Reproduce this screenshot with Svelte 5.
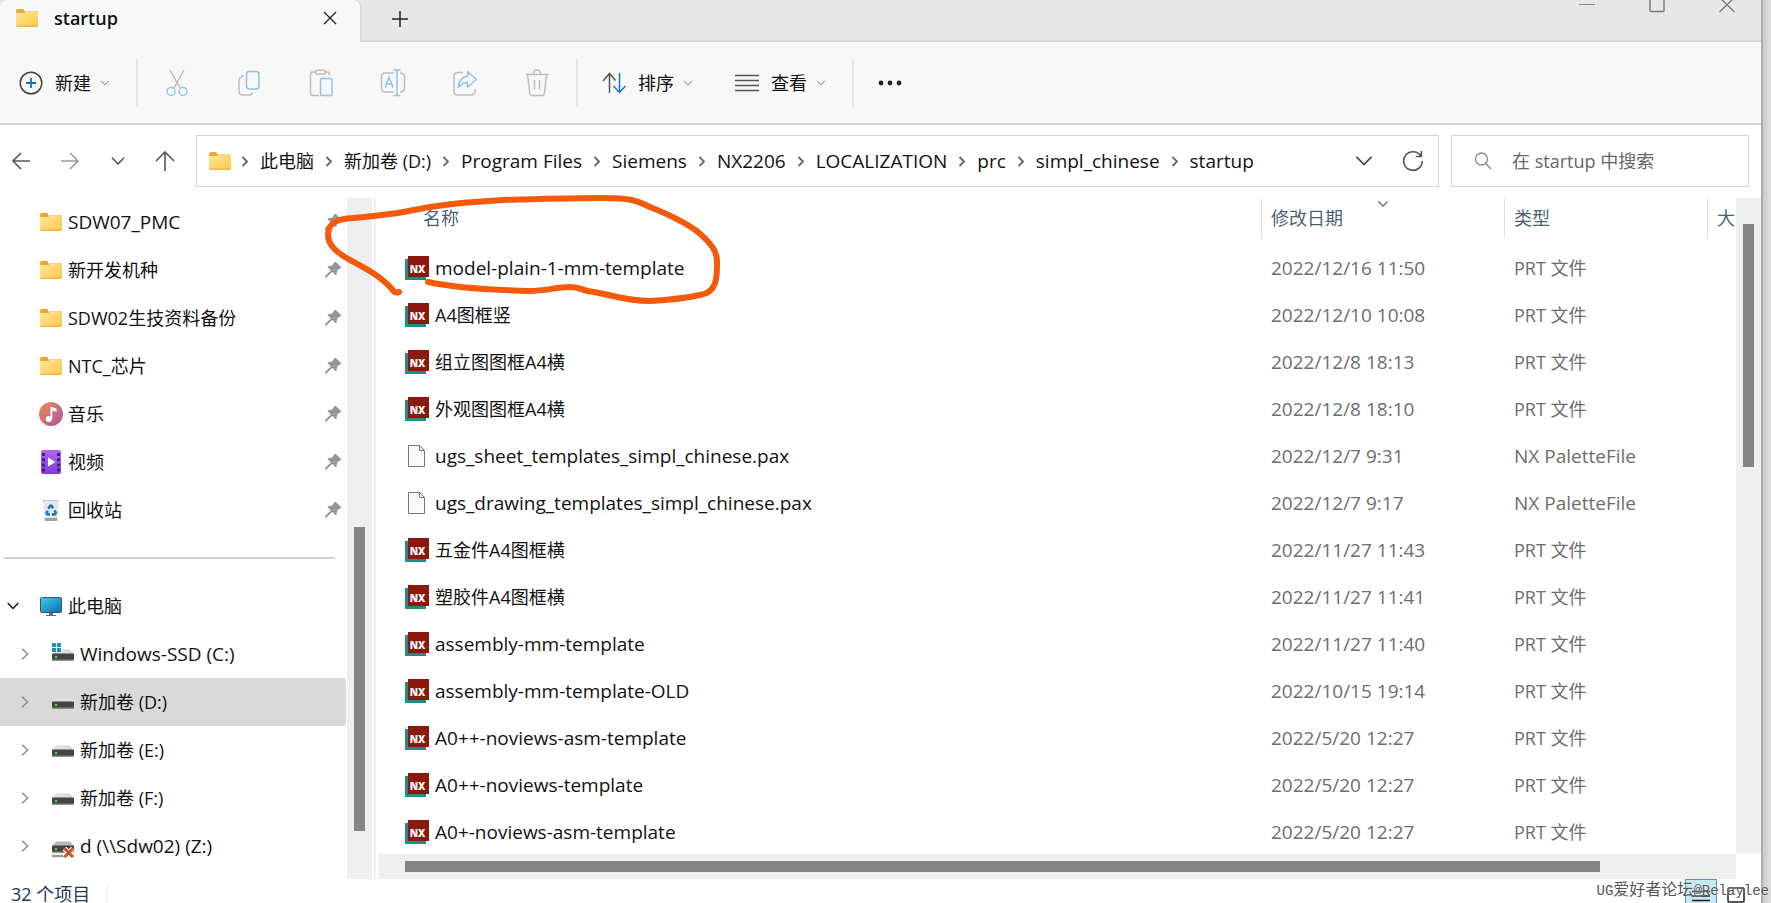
<script lang="ts">
  type FileRow = { name: string; date: string; kind: 'prt' | 'pax' };
  type Drive = { label: string; icon: string };

  const crumbs = ['此电脑', '新加卷 (D:)', 'Program Files', 'Siemens', 'NX2206', 'LOCALIZATION', 'prc', 'simpl_chinese', 'startup'];

  const tools = [
    { id: 'cut', label: '剪切' },
    { id: 'copy', label: '复制' },
    { id: 'paste', label: '粘贴' },
    { id: 'rename', label: '重命名' },
    { id: 'share', label: '共享' },
    { id: 'trash', label: '删除' }
  ];

  const pinned = [
    { label: 'SDW07_PMC', icon: 'folder' },
    { label: '新开发机种', icon: 'folder' },
    { label: 'SDW02生技资料备份', icon: 'folder' },
    { label: 'NTC_芯片', icon: 'folder' },
    { label: '音乐', icon: 'music' },
    { label: '视频', icon: 'video' },
    { label: '回收站', icon: 'bin' }
  ];

  const drives: Drive[] = [
    { label: 'Windows-SSD (C:)', icon: 'system' },
    { label: '新加卷 (D:)', icon: 'drive' },
    { label: '新加卷 (E:)', icon: 'drive' },
    { label: '新加卷 (F:)', icon: 'drive' },
    { label: 'd (\\\\Sdw02) (Z:)', icon: 'network' }
  ];

  const files: FileRow[] = [
    { name: 'model-plain-1-mm-template', date: '2022/12/16 11:50', kind: 'prt' },
    { name: 'A4图框竖', date: '2022/12/10 10:08', kind: 'prt' },
    { name: '组立图图框A4横', date: '2022/12/8 18:13', kind: 'prt' },
    { name: '外观图图框A4横', date: '2022/12/8 18:10', kind: 'prt' },
    { name: 'ugs_sheet_templates_simpl_chinese.pax', date: '2022/12/7 9:31', kind: 'pax' },
    { name: 'ugs_drawing_templates_simpl_chinese.pax', date: '2022/12/7 9:17', kind: 'pax' },
    { name: '五金件A4图框横', date: '2022/11/27 11:43', kind: 'prt' },
    { name: '塑胶件A4图框横', date: '2022/11/27 11:41', kind: 'prt' },
    { name: 'assembly-mm-template', date: '2022/11/27 11:40', kind: 'prt' },
    { name: 'assembly-mm-template-OLD', date: '2022/10/15 19:14', kind: 'prt' },
    { name: 'A0++-noviews-asm-template', date: '2022/5/20 12:27', kind: 'prt' },
    { name: 'A0++-noviews-template', date: '2022/5/20 12:27', kind: 'prt' },
    { name: 'A0+-noviews-asm-template', date: '2022/5/20 12:27', kind: 'prt' }
  ];

  const kinds = { prt: 'PRT 文件', pax: 'NX PaletteFile' };

  let selected = $state('新加卷 (D:)');
  let search = $state('');

  // scroll positions, in percent of the track
  const sideScroll = { start: 48.3, size: 44.6 };
  const fileScroll = { start: 4, size: 37 };
  const wideScroll = { start: 2, size: 88 };

  // latin-only labels are set one size up to sit level with the chinese ones
  function isLatin(text: string) {
    return /^[\x20-\x7e]+$/.test(text);
  }
</script>

{#snippet chevron(size: number)}
  <svg width={size} height={size} viewBox="0 0 12 12" fill="none" stroke="currentColor" stroke-width={size > 14 ? 1 : 1.2}><path d="M1.5 3.5L6 8.2l4.500-4.700" /></svg>
{/snippet}

{#snippet icon(name: string)}
  {#if name === 'folder'}
    <svg class="icon" viewBox="0 0 24 24">
      <defs>
        <linearGradient id="folder-front" x1="0" y1="0" x2="1" y2="1">
          <stop offset="0" stop-color="#ffe69a" />
          <stop offset="1" stop-color="#fdca45" />
        </linearGradient>
      </defs>
      <path d="M1 5q0-2 2-2h4.500q1 0 1.500 1l.5 1.500H23V10H1z" fill="#e3ab2f" />
      <path d="M1 7h8l1.500-1H23v13.500q0 1-1 1H2q-1 0-1-1z" fill="url(#folder-front)" />
      <path d="M1.500 20.200h21" stroke="#dba635" />
    </svg>
  {:else if name === 'music'}
    <svg class="icon" viewBox="0 0 24 24">
      <defs>
        <linearGradient id="music-disc" x1="0" y1="0" x2="1" y2="1">
          <stop offset="0" stop-color="#ee8a55" />
          <stop offset="1" stop-color="#a8559d" />
        </linearGradient>
      </defs>
      <circle cx="12" cy="12" r="12" fill="url(#music-disc)" />
      <circle cx="9.800" cy="17" r="3" fill="#fff" />
      <path d="M11.500 17V4.500l6 2v3.500l-4.200-1.500V17z" fill="#fff" />
    </svg>
  {:else if name === 'video'}
    <svg class="icon" viewBox="0 0 24 24">
      <defs>
        <linearGradient id="video-film" x1="0" y1="0" x2="0" y2="1">
          <stop offset="0" stop-color="#b069ec" />
          <stop offset="1" stop-color="#8338d6" />
        </linearGradient>
      </defs>
      <rect x="2" width="20" height="24" rx="2" fill="url(#video-film)" />
      <path d="M4.500 3v20M19.500 3v20" stroke="#44207c" stroke-width="3" stroke-dasharray="3 2.200" />
      <path d="M9 7.500l7.500 4.500L9 16.500z" fill="#fff" />
    </svg>
  {:else if name === 'bin'}
    <svg class="icon" viewBox="0 0 24 24">
      <path d="M4 2.500h16l-1.800 20H5.800z" fill="#e4e8ec" />
      <path d="M5.600 20h12.800l-.3 3H5.900z" fill="#9ba1a8" />
      <path d="M4 2.500h16" stroke="#b6bbc1" stroke-dasharray="3 1" />
      <g fill="none" stroke="#1b77c5" stroke-width="2.600">
        <path d="M9.300 10.800l1.600-2.600q1-1 2 0l1.300 2" />
        <path d="M15.400 12.300l1.200 2.200q.2 1.700-1.600 1.900h-2" />
        <path d="M10.800 16.400H9q-1.800-.4-1.200-2l.9-1.500" />
      </g>
    </svg>
  {:else if name === 'pc'}
    <svg class="icon" viewBox="0 0 24 24">
      <defs>
        <linearGradient id="pc-screen" x1="0" y1="0" x2="1" y2="1">
          <stop offset="0" stop-color="#37d2e6" />
          <stop offset="1" stop-color="#1268b8" />
        </linearGradient>
      </defs>
      <path d="M10 18h4v3h3v1H7v-1h3z" fill="#61717e" />
      <rect x="1.500" y="3.500" width="21" height="15" rx="1" fill="url(#pc-screen)" stroke="#36566d" />
    </svg>
  {:else}
    <svg class="icon" viewBox="0 0 24 24">
      <path d="M5 7.500h14l4 4.500H1z" fill={name === 'network' ? '#b9b9b9' : '#dedede'} />
      <rect x="1" y="11.500" width="22" height="7" rx="1" fill="#434343" />
      <path d="M1 18h22" stroke="#8a8a8a" />
      <circle cx="5" cy="15" r="1.300" fill="#5dc463" />
      {#if name === 'system'}
        <path d="M0 0h11v10H0z" fill="#fff" />
        <path d="M1 1h4v4H1zM6 1h4v4H6zM1 6h4v4H1zM6 6h4v4H6z" fill="#1b8fcb" />
      {:else if name === 'network'}
        <path d="M1 22h16" stroke="#9a9a9a" stroke-width="2.500" />
        <path d="M13.500 14.500l8.500 8.500m0-8.500L13.500 23" stroke="#fff" stroke-width="5" />
        <path d="M13.500 14.500l8.500 8.500m0-8.500L13.500 23" stroke="#c94e20" stroke-width="3" />
      {/if}
    </svg>
  {/if}
{/snippet}

{#snippet tool(name: string)}
  <svg width="26" height="28" viewBox="0 0 26 28" fill="none" stroke="#bdbdbd" stroke-width="1.500">
    {#if name === 'cut'}
      <path d="M6 1l10 18M20 1L10 19" />
      <g stroke="#8fc3ea"><circle cx="7" cy="22.500" r="4" /><circle cx="19" cy="22.500" r="4" /></g>
    {:else if name === 'copy'}
      <path d="M8 7H6q-3 2-3 4v11q0 4 4 4h6q3 0 3.500-2.500" />
      <rect x="10.500" y="2.500" width="12.500" height="17.500" rx="3" stroke="#8fc3ea" />
    {:else if name === 'paste'}
      <path d="M8 3H4.500Q2.500 3 2.500 5v19q0 2.500 2 2.500H11M17 3h2.500q2 0 2 3" />
      <rect x="7.500" y="1.200" width="10" height="4" rx="2" />
      <rect x="12.500" y="9.500" width="11.500" height="17" rx="1.500" stroke="#8fc3ea" />
    {:else if name === 'rename'}
      <path d="M14 4H5Q1.500 4 1.500 8v11q0 4 3.500 4h9M20 4q4.500 0 4.500 4v11q0 4-4.500 4" />
      <path d="M13.500 1h7M13.500 26.500h7M17 1v25.500M5 18.500L9 8l4 10.500M6.500 15h5" stroke="#8fc3ea" />
    {:else if name === 'share'}
      <path d="M11 3.500H6q-4 0-4 4v14Q2 26 6 26h13q4 0 4-4.500V20" />
      <path d="M15.500 2.500l9 8-9 7.500v-4.500q-5-.5-9 5 .5-10 9-11.500z" stroke="#8fc3ea" stroke-linejoin="round" />
    {:else}
      <path d="M1.500 5.500h23M9.500 5q0-4 3.500-4t3.500 4M3.500 5.500l2.300 19q.3 2 2.300 2h10q2 0 2.300-2l2.200-19M10.500 11v9.500M15.500 11v9.500" />
    {/if}
  </svg>
{/snippet}

<div class="page">
  <div class="window">
    <header class="tabs">
      <div class="tab">
        {@render icon('folder')}
        <span>startup</span>
        <button aria-label="关闭标签页">
          <svg width="14" height="14" viewBox="0 0 14 14" stroke="#222" stroke-width="1.300"><path d="M1 1l12 12M13 1L1 13" /></svg>
        </button>
      </div>
      <button class="add" aria-label="新标签页">
        <svg width="16" height="16" viewBox="0 0 16 16" stroke="#222" stroke-width="1.500"><path d="M8 0v16M0 8h16" /></svg>
      </button>
      <div class="controls">
        <button aria-label="最小化"><svg width="16" height="14" viewBox="0 0 16 14" stroke="#8a8a8a"><path d="M0 4.500h16" /></svg></button>
        <button aria-label="最大化"><svg width="16" height="14" viewBox="0 0 16 14" fill="none" stroke="#777" stroke-width="1.400"><rect x="1" y="-3" width="14" height="14.500" rx="1" /></svg></button>
        <button aria-label="关闭"><svg width="16" height="14" viewBox="0 0 16 14" stroke="#777" stroke-width="1.300"><path d="M.5-2.500l15 14.500M15.500-2.500L.5 12" /></svg></button>
      </div>
    </header>

    <div class="toolbar">
      <button class="command new">
        <svg width="24" height="24" viewBox="0 0 24 24" fill="none" stroke="#444" stroke-width="1.500">
          <circle cx="12" cy="12" r="10.800" /><path d="M12 7v10M7 12h10" stroke="#0f73c4" stroke-width="1.800" />
        </svg>
        新建
        {@render chevron(10)}
      </button>
      <div class="tools">
        {#each tools as item}
          <button aria-label={item.label} disabled>{@render tool(item.id)}</button>
        {/each}
      </div>
      <div class="group">
        <button class="command">
          <svg width="24" height="24" viewBox="0 0 24 24" fill="none" stroke="#555" stroke-width="1.500">
            <path d="M7.500 22V3M1 10l6.500-7.500 6 7" /><path d="M17.500 2v19M11.500 15l6 6.500 6-6.500" stroke="#1874c2" />
          </svg>
          排序
          {@render chevron(10)}
        </button>
        <button class="command">
          <svg width="24" height="24" viewBox="0 0 24 24" stroke="#555" stroke-width="1.500"><path d="M0 4.500h24M0 9.500h24M0 14.500h24M0 19.500h24" /></svg>
          查看
          {@render chevron(10)}
        </button>
      </div>
      <button class="more" aria-label="更多">
        <svg width="24" height="6" viewBox="0 0 24 6" fill="#222"><circle cx="3" cy="3" r="2.400" /><circle cx="12" cy="3" r="2.400" /><circle cx="21" cy="3" r="2.400" /></svg>
      </button>
    </div>

    <div class="address">
      <nav class="history" aria-label="导航">
        <button aria-label="后退"><svg width="20" height="20" viewBox="0 0 20 20" fill="none" stroke="#555" stroke-width="1.600"><path d="M19 10H2M10 2l-8 8 8 8" /></svg></button>
        <button aria-label="前进"><svg width="20" height="20" viewBox="0 0 20 20" fill="none" stroke="#999" stroke-width="1.600"><path d="M1 10h17M10 2l8 8-8 8" /></svg></button>
        <button aria-label="最近">{@render chevron(16)}</button>
        <button aria-label="向上"><svg width="20" height="20" viewBox="0 0 20 20" fill="none" stroke="#555" stroke-width="1.600"><path d="M10 20V1M1 10l9-9 9 9" /></svg></button>
      </nav>
      <div class="path">
        {@render icon('folder')}
        <ol>
          {#each crumbs as crumb}
            <li>
              <svg width="30" height="12" viewBox="0 0 30 12" fill="none" stroke="#666" stroke-width="1.800"><path d="M12.500 2l4.500 4.500-4.500 4.500" /></svg>
              <a class:latin={isLatin(crumb)} href="#{crumb}">{crumb}</a>
            </li>
          {/each}
        </ol>
        <button aria-label="历史记录">{@render chevron(20)}</button>
        <button aria-label="刷新">
          <svg width="22" height="22" viewBox="0 0 22 22" fill="none" stroke="#555" stroke-width="1.600"><path d="M18.500 5.500A9.300 9.300 0 1 0 20.300 11M19.300 1v5.500h-5.500" /></svg>
        </button>
      </div>
      <label class="search">
        <svg width="18" height="18" viewBox="0 0 18 18" fill="none" stroke="#888" stroke-width="1.300"><circle cx="7.500" cy="7" r="6" /><path d="M11.800 11.500L17 17" /></svg>
        <input type="text" aria-label="搜索" placeholder="在 startup 中搜索" bind:value={search} />
      </label>
    </div>

    <main>
      <aside>
        <div class="tree">
          {#each pinned as item}
            <a class="node" href="#{item.label}">
              <span class="slot"></span>
              {@render icon(item.icon)}
              <span class="label" class:latin={isLatin(item.label)}>{item.label}</span>
              <svg class="pin" viewBox="0 0 16 16" fill="#8e989f"><path d="M9.500 0q1-.4 1.700.3l4.500 4.500q.7.800-.3 1.500l-3.200 1.900-.7 4.300q-.4 1-1.200.3L7.200 9.800 1.400 15.500H0v-1.400l5.800-5.700-2.900-2.900q-.8-.8.300-1.300l4.200-.8z" /></svg>
            </a>
          {/each}
          <hr />
          <a class="node" href="#pc">
            <span class="slot open">{@render chevron(14)}</span>
            {@render icon('pc')}
            <span class="label">此电脑</span>
          </a>
          {#each drives as drive}
            <a
              class="node"
              class:selected={drive.label === selected}
              href="#{drive.label}"
              onclick={() => (selected = drive.label)}
            >
              <span class="slot closed">{@render chevron(14)}</span>
              {@render icon(drive.icon)}
              <span class="label" class:latin={isLatin(drive.label)}>{drive.label}</span>
            </a>
          {/each}
        </div>
        <div class="track">
          <div class="thumb" style="margin-top: {sideScroll.start}cqh; height: {sideScroll.size}cqh"></div>
        </div>
      </aside>

      <section class="files">
        <div class="list">
          <table>
            <colgroup>
              <col />
              <col class="date" />
              <col class="type" />
              <col class="size" />
            </colgroup>
            <thead>
              <tr>
                <th><button class="first">名称</button></th>
                <th><button>修改日期<span class="sort">{@render chevron(12)}</span></button></th>
                <th><button>类型</button></th>
                <th><button>大</button></th>
              </tr>
            </thead>
            <tbody>
              {#each files as file}
                <tr>
                  <td>
                    <a class="file" class:latin={isLatin(file.name)} href="#{file.name}">
                      {#if file.kind === 'prt'}
                        <svg class="icon" viewBox="0 0 24 24">
                          <path d="M0 3h21v21H0z" fill="#258a86" />
                          <path d="M3 0h21v21H3z" fill="#8c170d" />
                          <text x="12.500" y="17" text-anchor="middle" font-size="10" font-weight="800" fill="#fff">NX</text>
                        </svg>
                      {:else}
                        <svg class="icon" viewBox="0 0 24 24" fill="#fafafa" stroke="#777"><path d="M3.500 1.500h11l5 5v16h-16zM14.500 1.500v5h5" /></svg>
                      {/if}
                      {file.name}
                    </a>
                  </td>
                  <td class="latin">{file.date}</td>
                  <td class:latin={isLatin(kinds[file.kind])}>{kinds[file.kind]}</td>
                  <td></td>
                </tr>
              {/each}
            </tbody>
          </table>
        </div>
        <div class="track">
          <div class="thumb" style="margin-top: {fileScroll.start}cqh; height: {fileScroll.size}cqh"></div>
        </div>
        <div class="track wide">
          <div class="thumb" style="margin-left: {wideScroll.start}%; width: {wideScroll.size}%"></div>
        </div>
      </section>
    </main>

    <footer>
      <span class="count">32 个项目</span>
      <button class="view active" aria-label="详细信息">
        <svg width="18" height="14" viewBox="0 0 18 14" stroke="#222" stroke-width="1.300"><path d="M0 3.500h18M0 8h18M0 12.500h18" /></svg>
      </button>
      <button class="view" aria-label="大图标">
        <svg width="18" height="16" viewBox="0 0 18 16" fill="none" stroke="#222" stroke-width="1.500"><rect x="1" y="1" width="16" height="14" rx="1" /></svg>
      </button>
    </footer>
  </div>

  <svg class="marker" width="420" height="130" viewBox="310 185 420 130">
    <path d="M399 292Q395 294 391 288C379 275 363 267 350 260C338 253 328 246 328 235C328 222 338 219 353 218C372 216 387 215 403 212C440 204 470 202 503 200C540 199 570 198 603 198C632 198 637 201 650 207C665 213 685 222 698 232C712 244 717 252 717 261C717 276 718 292 700 295C682 299 668 300 650 301C624 301 610 294 588 291C580 289 578 287 570 287C557 287 545 291 530 291C490 290 455 288 428 282" />
  </svg>
  <div class="watermark">UG<span>爱好者论坛</span>@Relaylee</div>
</div>

<style>
  :global(body) {
    margin: 0;
    background: #dcdcdc;
  }

  .page {
    position: relative;
    height: 100vh;
    overflow: hidden;
    padding-right: 8px;
    box-sizing: border-box;
    background: linear-gradient(to left, #dedede, #cbcbcb 8px);
    font-family: "Open Sans", "Noto Sans CJK SC", sans-serif;
    font-size: 18px;
    line-height: 24px;
    color: #111;
  }

  .window {
    display: flex;
    flex-direction: column;
    height: 100%;
    box-sizing: border-box;
    border-right: 2px solid #adadad;
    background: #fff;
  }

  .latin {
    font-size: 19px;
  }

  button {
    display: flex;
    align-items: center;
    padding: 0;
    border: 0;
    background: none;
    font: inherit;
    color: inherit;
  }

  a {
    color: inherit;
    text-decoration: none;
  }

  svg {
    display: block;
    flex: none;
  }

  .icon {
    width: 24px;
    height: 24px;
  }

  /* tabs */
  .tabs {
    display: flex;
    height: 42px;
    box-sizing: border-box;
    box-shadow: inset 0 -2px #dadada;
    background: #e7e7e7;
  }

  .tab {
    display: flex;
    align-items: center;
    width: 362px;
    box-sizing: border-box;
    padding: 0 23px 6px 15px;
    border-right: 2px solid #dadada;
    border-radius: 8px 8px 0 0;
    background: #f8f8f8;
    font-size: 18px;
    font-weight: 600;
  }

  .tab span {
    flex: 1;
    margin-left: 15px;
  }

  .add {
    height: 38px;
    margin-left: 30px;
  }

  .controls {
    display: flex;
    align-items: flex-start;
    gap: 54px;
    margin-left: auto;
    padding-right: 26px;
  }

  /* toolbar */
  .toolbar {
    display: flex;
    align-items: center;
    height: 83px;
    box-sizing: border-box;
    border-bottom: 2px solid #d3d3d3;
    background: #f8f8f8;
  }

  .command {
    gap: 12px;
  }

  .command :global(svg:last-child) {
    color: #777;
    margin-left: -3px;
  }

  .new {
    padding: 0 26px 0 19px;
  }

  .tools,
  .group {
    display: flex;
    align-items: center;
    height: 48px;
    border-left: 2px solid #e6e6e6;
  }

  .tools {
    gap: 46px;
    padding: 0 26px;
    border-right: 2px solid #e6e6e6;
  }

  .group {
    gap: 42px;
    padding: 0 26px 0 24px;
    border-left: 0;
    border-right: 2px solid #e6e6e6;
  }

  .more {
    margin-left: 24px;
  }

  /* address bar */
  .address {
    display: flex;
    gap: 12px;
    padding: 10px 12px 11px 11px;
  }

  .history {
    display: flex;
    justify-content: space-between;
    width: 164px;
    margin-right: 9px;
    color: #444;
  }

  .path,
  .search {
    display: flex;
    align-items: center;
    height: 52px;
    box-sizing: border-box;
    border: 1px solid #d3d3d3;
  }

  .path {
    flex: 1;
    gap: 28px;
    min-width: 0;
    padding: 0 14px 0 11px;
    color: #444;
  }

  .path ol {
    display: flex;
    flex: 1;
    min-width: 0;
    overflow: hidden;
    margin: 0 0 0 -30px;
    padding: 0;
    list-style: none;
    color: #111;
  }

  .path li {
    display: flex;
    align-items: center;
    white-space: nowrap;
  }

  .search {
    width: 298px;
    gap: 20px;
    padding: 0 22px;
  }

  .search input {
    flex: 1;
    min-width: 0;
    padding: 0;
    border: 0;
    outline: 0;
    background: none;
    font: inherit;
  }

  .search input::placeholder {
    color: #666;
    opacity: 1;
  }

  /* body */
  main {
    display: flex;
    flex: 1;
    min-height: 0;
  }

  aside {
    display: flex;
    flex: none;
    padding-right: 2px;
    border-right: 2px solid #f2f2f2;
  }

  .tree {
    width: 347px;
    overflow: hidden;
  }

  .node {
    display: flex;
    align-items: center;
    height: 48px;
    margin-right: 1px;
    white-space: nowrap;
  }

  .node.selected {
    border-radius: 0 3px 3px 0;
    background: #d9d9d9;
  }

  .slot {
    width: 39px;
    box-sizing: border-box;
  }

  .slot.open {
    padding-left: 6px;
  }

  .slot.closed {
    width: 51px;
    padding-left: 18px;
    color: #888;
  }

  .slot.closed :global(svg) {
    transform: rotate(-90deg);
  }

  .label {
    flex: 1;
    margin-left: 5px;
  }

  .pin {
    width: 16px;
    height: 16px;
    margin-right: 5px;
  }

  hr {
    height: 2px;
    margin: 23px 12px 23px 4px;
    border: 0;
    background: #d0d0d0;
  }

  .track {
    width: 25px;
    container-type: size;
    background: #efefef;
  }

  .thumb {
    width: 11px;
    margin-left: 7px;
    background: #858585;
  }

  .files {
    display: grid;
    flex: 1;
    grid-template: minmax(0, 1fr) 25px / minmax(0, 1fr) 25px;
    min-width: 0;
    padding-left: 2px;
  }

  .track.wide {
    display: flex;
    align-items: center;
    width: auto;
  }

  .wide .thumb {
    height: 11px;
  }

  .list {
    overflow: hidden;
  }

  table {
    width: 100%;
    table-layout: fixed;
    border-collapse: collapse;
    color: #6d6d6d;
  }

  .date {
    width: 243px;
  }

  .type {
    width: 203px;
  }

  .size {
    width: 29px;
  }

  tr {
    height: 47px;
  }

  thead tr {
    height: 46px;
  }

  th,
  td {
    padding: 0;
    text-align: left;
    font-weight: 400;
    white-space: nowrap;
  }

  th {
    vertical-align: top;
  }

  td + td {
    padding-left: 10px;
  }

  th button {
    position: relative;
    width: 100%;
    height: 40px;
    padding-left: 9px;
    border-left: 1px solid #e0e0e0;
    color: #4c5f76;
  }

  th .first {
    padding-left: 45px;
    border-left: 0;
  }

  .sort {
    position: absolute;
    top: 0;
    left: 50%;
    margin-left: -6px;
  }

  .file {
    display: flex;
    align-items: center;
    gap: 6px;
    padding-left: 27px;
    color: #111;
  }

  /* status bar */
  footer {
    display: flex;
    align-items: flex-start;
    gap: 3px;
    height: 24px;
    overflow: hidden;
    padding-right: 9px;
    color: #1e395b;
  }

  .count {
    margin: 3px auto 0 0;
    padding: 0 17px 0 11px;
    border-right: 1px solid #eee;
  }

  .view {
    justify-content: center;
    flex: none;
    width: 32px;
    height: 32px;
    box-sizing: border-box;
  }

  .view.active {
    border: 1px solid #4a9dbd;
    background: #c9e7f5;
  }

  .marker {
    position: absolute;
    top: 185px;
    left: 310px;
    fill: none;
    stroke: #f55a0b;
    stroke-width: 6;
    stroke-linecap: round;
    pointer-events: none;
  }

  .watermark {
    position: absolute;
    right: 2px;
    bottom: 0;
    font-family: "Liberation Mono", "Noto Sans CJK SC", monospace;
    font-size: 14px;
    color: #555;
    text-shadow: 0 0 2px #fff;
  }

  .watermark span {
    font-size: 16px;
  }
</style>
